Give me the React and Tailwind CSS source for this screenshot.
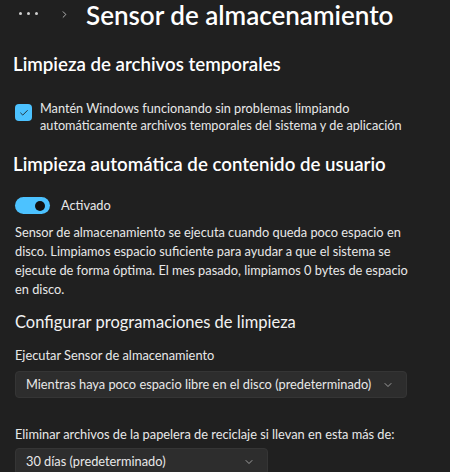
import React from 'react';
import { ChevronDown, ChevronRight, Check } from 'lucide-react';

const font = { fontFamily: 'Lato, "Noto Sans", sans-serif' };

const Dropdown = ({ label, width }) => (
  <div className={`${width} h-[27px] bg-[#2d2d2d] rounded-[4px] flex items-center justify-between pl-[10px] pr-[12px] border border-[#353535]`}>
    <span className="text-[12.8px] text-[#e8e8e8] leading-none whitespace-nowrap">{label}</span>
    <ChevronDown size={12} strokeWidth={1.5} className="text-[#c0c0c0]" />
  </div>
);

export default function App() {
  return (
    <div className="w-[450px] h-[472px] bg-[#202020] overflow-hidden text-white whitespace-nowrap" style={font}>
      {/* breadcrumb header */}
      <div className="flex items-center h-[30px] pl-[19px]">
        <span className="flex gap-[5px] items-center mt-[-3px]">
          <span className="w-[3px] h-[3px] rounded-full bg-[#cfcfcf]" />
          <span className="w-[3px] h-[3px] rounded-full bg-[#cfcfcf]" />
          <span className="w-[3px] h-[3px] rounded-full bg-[#cfcfcf]" />
        </span>
        <ChevronRight size={11} strokeWidth={1.8} className="text-[#cfcfcf] ml-[21px] mt-[-2px]" />
        <h1 className="ml-[16px] text-[26px] font-semibold leading-[30px]">Sensor de almacenamiento</h1>
      </div>

      <div className="pl-[13px]">
        <h2 className="mt-[23px] text-[18.7px] font-semibold leading-[22px]">Limpieza de archivos temporales</h2>

        <div className="mt-[25px] flex items-start gap-[8px] pl-[2px]">
          <div className="mt-[4px] w-[17px] h-[17px] rounded-[4px] bg-[#4cc2ff] flex items-center justify-center shrink-0">
            <Check size={10} strokeWidth={2} className="text-[#1a1a1a]" />
          </div>
          <p className="text-[12.7px] leading-[17px] text-[#e8e8e8]">
            Mantén Windows funcionando sin problemas limpiando
            <br />
            automáticamente archivos temporales del sistema y de aplicación
          </p>
        </div>

        <h2 className="mt-[18px] text-[18.7px] font-semibold leading-[24px]">Limpieza automática de contenido de usuario</h2>

        <div className="mt-[21px] flex items-center gap-[11px] pl-[2px]">
          <div className="w-[35px] h-[17px] rounded-full bg-[#4cc2ff] flex items-center justify-end pr-[5px]">
            <span className="w-[10px] h-[10px] rounded-full bg-[#111]" />
          </div>
          <span className="text-[12.8px] leading-[17px] text-[#e8e8e8]">Activado</span>
        </div>

        <p className="mt-[9px] pl-[2px] text-[12.8px] leading-[19px] text-[#e8e8e8]">
          Sensor de almacenamiento se ejecuta cuando queda poco espacio en
          <br />
          disco. Limpiamos espacio suficiente para ayudar a que el sistema se
          <br />
          ejecute de forma óptima. El mes pasado, limpiamos 0 bytes de espacio
          <br />
          en disco.
        </p>

        <h3 className="mt-[11px] pl-[2px] text-[16.5px] leading-[24px] text-[#f2f2f2]">Configurar programaciones de limpieza</h3>

        <div className="mt-[12px] pl-[2px] text-[12.8px] leading-[18px] text-[#e8e8e8]">Ejecutar Sensor de almacenamiento</div>
        <div className="mt-[7px] pl-[2px]">
          <Dropdown width="w-[392px]" label="Mientras haya poco espacio libre en el disco (predeterminado)" />
        </div>

        <div className="mt-[27px] pl-[2px] text-[12.8px] leading-[18px] text-[#e8e8e8]">Eliminar archivos de la papelera de reciclaje si llevan en esta más de:</div>
        <div className="mt-[5px] pl-[2px]">
          <Dropdown width="w-[253px]" label="30 días (predeterminado)" />
        </div>
      </div>
    </div>
  );
}
